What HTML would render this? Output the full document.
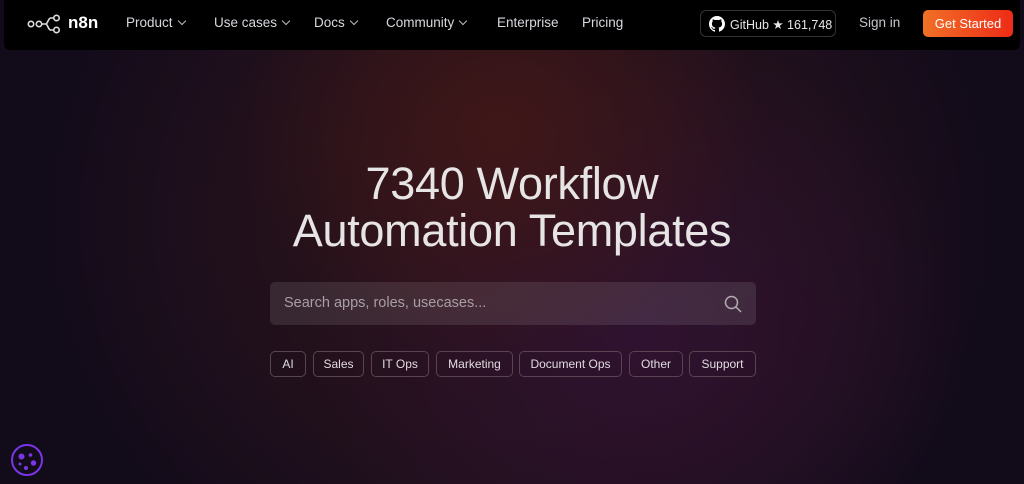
<!DOCTYPE html>
<html><head><meta charset="utf-8"><style>
*{box-sizing:border-box;margin:0;padding:0}
body{width:1024px;height:484px;overflow:hidden;font-family:"Liberation Sans",sans-serif;color:#fff;
background:
radial-gradient(ellipse 260px 230px at 500px 130px,#3f1718 0%,rgba(63,23,24,0) 100%),
radial-gradient(ellipse 330px 300px at 640px 330px,#2f1230 0%,rgba(47,18,48,0) 100%),
radial-gradient(ellipse 480px 430px at 520px 220px,#2e1418 0%,#1e0f1c 70%,#120b1a 100%);
background-color:#120b1a;position:relative}
.nav{position:absolute;left:4px;top:0;width:1016px;height:50px;background:#000;border-radius:0 0 6px 6px}
.nav span{position:absolute;top:15px;font-size:13.5px;color:#d8d8df;white-space:nowrap}
.chev{display:inline-block;width:6px;height:6px;border-right:1px solid #bbb;border-bottom:1px solid #bbb;transform:rotate(45deg);margin-left:6px;position:relative;top:-3px}
.gh{position:absolute;left:700px;top:10px;width:136px;height:27px;border:1px solid #333;border-radius:6px}
.gs{position:absolute;left:923px;top:10px;width:90px;height:27px;border-radius:5px;background:linear-gradient(90deg,#f07026,#ee2b17);font-size:13px;text-align:center;line-height:27px;white-space:nowrap}
h1{position:absolute;left:0;width:1024px;top:160px;text-align:center;font-size:45px;font-weight:normal;line-height:47px;color:#e6e4e4;letter-spacing:-0.3px}
.search{position:absolute;left:270px;top:282px;width:486px;height:43px;background:rgba(255,255,255,0.1);border-radius:5px}
.search span{position:absolute;left:14px;top:13px;font-size:14.5px;color:#a99ea5}
.chip{position:absolute;top:351px;height:26px;border:1px solid #5a4352;border-radius:5px;font-size:12px;color:#e0dbe0;text-align:center;line-height:24px;white-space:nowrap}
</style></head><body>
<div class="nav">
<svg style="position:absolute;left:23px;top:13px" width="42" height="22" viewBox="0 0 42 22" fill="none" stroke="#ddd" stroke-width="1.6">
<circle cx="4" cy="11" r="2.7"/><circle cx="12" cy="11" r="2.7"/><path d="M14.7 11h4c2 0 2.5-6 5-6h3M18.7 11c2 0 2.5 6 5 6h3"/><circle cx="29.5" cy="5" r="2.7"/><circle cx="29.5" cy="17" r="2.7"/></svg>
<span style="left:64px;top:13px;font-size:17px;font-weight:bold;color:#fff">n8n</span>
<span style="left:122px">Product<i class="chev"></i></span>
<span style="left:210px">Use cases<i class="chev"></i></span>
<span style="left:310px">Docs<i class="chev"></i></span>
<span style="left:382px">Community<i class="chev"></i></span>
<span style="left:493px">Enterprise</span>
<span style="left:578px">Pricing</span>
<span style="left:855px;color:#c9c4cc">Sign in</span>
</div>
<div class="gh">
<svg style="position:absolute;left:8px;top:5px" width="16" height="16" viewBox="0 0 16 16"><path fill="#fff" d="M8 0C3.58 0 0 3.58 0 8c0 3.54 2.290 6.53 5.47 7.590.4.07.55-.17.55-.38v-1.33c-2.230.48-2.7-1.07-2.7-1.07-.36-.92-.89-1.17-.89-1.170-.73-.5.05-.49.05-.49.8.06 1.23.83 1.23.83.72 1.22 1.87.87 2.33.66.07-.52.28-.87.5-1.07-1.78-.2-3.64-.89-3.64-3.95 0-.87.31-1.59.82-2.15-.08-.2-.36-1.02.08-2.12 0 0 .67-.21 2.2.82.64-.18 1.32-.27 2-.27s1.36.09 2 .27c1.53-1.04 2.2-.82 2.2-.82.44 1.1.16 1.92.08 2.12.51.56.82 1.27.82 2.15 0 3.07-1.87 3.75-3.65 3.95.29.25.54.73.54 1.48v2.2c0 .21.15.46.55.38A8 8 0 0016 8c0-4.42-3.58-8-8-8z"/></svg>
<span style="position:absolute;left:29px;top:6px;font-size:12.5px;color:#e6e6e6;white-space:nowrap">GitHub ★ 161,748</span>
</div>
<div class="gs">Get Started</div>
<h1>7340 Workflow<br>Automation Templates</h1>
<div class="search"><span>Search apps, roles, usecases...</span>
<svg style="position:absolute;right:14px;top:13px" width="18" height="18" viewBox="0 0 18 18" fill="none" stroke="#b3a9b0" stroke-width="1.5"><circle cx="7.5" cy="7.5" r="6"/><path d="M12 12l5 5"/></svg></div>
<div class="chip" style="left:270px;width:36px">AI</div>
<div class="chip" style="left:313px;width:51px">Sales</div>
<div class="chip" style="left:371px;width:58px">IT Ops</div>
<div class="chip" style="left:436px;width:77px">Marketing</div>
<div class="chip" style="left:519px;width:103px">Document Ops</div>
<div class="chip" style="left:629px;width:54px">Other</div>
<div class="chip" style="left:689px;width:67px">Support</div>
<svg style="position:absolute;left:10px;top:443px" width="34" height="34" viewBox="0 0 34 34"><circle cx="17" cy="17" r="15" fill="none" stroke="#7b35e8" stroke-width="2"/><g fill="#7b35e8"><circle cx="11.5" cy="13.5" r="3"/><circle cx="20.5" cy="12" r="1.8"/><circle cx="23.5" cy="20" r="2.7"/><circle cx="10" cy="21" r="1.5"/><circle cx="16" cy="25" r="2"/></g></svg>
</body></html>
